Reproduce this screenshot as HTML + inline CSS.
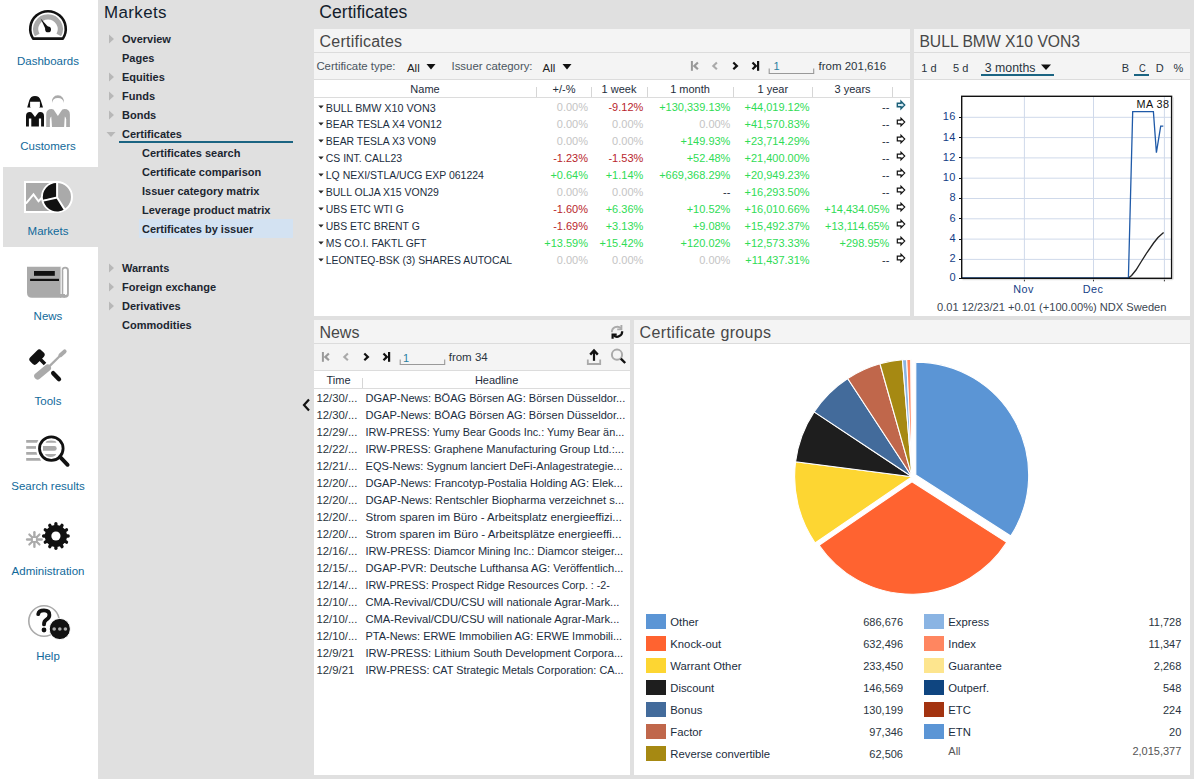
<!DOCTYPE html>
<html><head><meta charset="utf-8"><style>
html,body{margin:0;padding:0;}
body{width:1194px;height:779px;position:relative;overflow:hidden;background:#e0e0e0;font-family:"Liberation Sans", sans-serif;}
.t{position:absolute;white-space:nowrap;line-height:1;}
.tc{text-align:center;}
.r{position:absolute;}
.s{position:absolute;overflow:visible;}
</style></head><body>
<div class="r" style="left:0px;top:0px;width:98px;height:779px;background:#ffffff;"></div>
<div class="r" style="left:3px;top:167px;width:95px;height:80px;background:#e0e0e0;"></div>
<div class="t tc" style="left:-152.0px;width:400px;top:55.67px;font-size:11.5px;color:#11699a;font-weight:normal;">Dashboards</div>
<div class="t tc" style="left:-152.0px;width:400px;top:140.67px;font-size:11.5px;color:#11699a;font-weight:normal;">Customers</div>
<div class="t tc" style="left:-152.0px;width:400px;top:225.67px;font-size:11.5px;color:#11699a;font-weight:normal;">Markets</div>
<div class="t tc" style="left:-152.0px;width:400px;top:310.67px;font-size:11.5px;color:#11699a;font-weight:normal;">News</div>
<div class="t tc" style="left:-152.0px;width:400px;top:395.67px;font-size:11.5px;color:#11699a;font-weight:normal;">Tools</div>
<div class="t tc" style="left:-152.0px;width:400px;top:480.67px;font-size:11.5px;color:#11699a;font-weight:normal;">Search results</div>
<div class="t tc" style="left:-152.0px;width:400px;top:565.67px;font-size:11.5px;color:#11699a;font-weight:normal;">Administration</div>
<div class="t tc" style="left:-152.0px;width:400px;top:650.67px;font-size:11.5px;color:#11699a;font-weight:normal;">Help</div>
<svg class="s" style="left:26px;top:8px;" width="44" height="34" viewBox="0 0 44 34">
<path d="M7.1 30.6 A17.75 17.75 0 1 1 36.9 30.6 Z" fill="#fff" stroke="#111" stroke-width="2.6" stroke-linejoin="round"/>
<path d="M11.2 27 A12.3 12.3 0 1 1 32.8 27" fill="none" stroke="#aaa" stroke-width="5.2"/>
<path d="M14.6 10.6 L20.2 22.6 L23.6 20.4 Z" fill="#111"/>
<circle cx="22.1" cy="21.4" r="2.9" fill="#111"/>
</svg>
<svg class="s" style="left:24px;top:92px;" width="48" height="38" viewBox="0 0 48 38">
<path d="M3.2 15.6 L5.3 8.2 Q6.6 3.9 11 3.9 Q15.4 3.9 16.7 8.2 L19 15.6 L15.1 15.6 L15.9 14.8 L15.9 9.8 L6.1 9.8 L6.1 14.8 L6.8 15.6 Z" fill="#111"/>
<path d="M2 34.6 L2 24 Q2 20 5.8 20 Q7.4 20 8.4 21.4 L11 25.1 L13.6 21.4 Q14.6 20 16.2 20 Q20 20 20 24 L20 34.6 L17.1 34.6 L17.1 26.6 L14.9 26.6 L14.9 34.6 L7.3 34.6 L7.3 26.6 L4.9 26.6 L4.9 34.6 Z" fill="#111"/>
<path d="M28.04 11 A6.1 6.1 0 1 1 39.76 11 A5.92 5.92 0 0 0 28.04 11 Z" fill="#aaa"/>
<path d="M22.2 34.9 L22.2 22.6 Q22.2 17.1 27.6 17.1 Q29.8 17.1 30.9 19.4 L33.9 23.9 L36.9 19.4 Q38 17.1 40.4 17.1 Q45.9 17.1 45.9 22.6 L45.9 34.9 Z" fill="#aaa"/>
<path d="M25.9 34.9 L25.9 27.5 Q26.3 25 27.3 24.6 L28 34.9 Z" fill="#fff"/>
<path d="M42.2 34.9 L42.2 27.5 Q41.8 25 40.8 24.6 L40.1 34.9 Z" fill="#fff"/>
</svg>
<svg class="s" style="left:22px;top:178px;" width="54" height="38" viewBox="0 0 54 38">
<rect x="3" y="4" width="32" height="30" fill="#aaa" stroke="#fff" stroke-width="2"/>
<path d="M3.9 25.6 L11.5 16.3 L16.5 23.3 L20.3 19.3" fill="none" stroke="#fff" stroke-width="2"/>
<circle cx="35" cy="19" r="15" fill="#aaa" stroke="#fff" stroke-width="2"/>
<path d="M35.1 19.5 L35.1 5 A14 14 0 0 0 21.1 21.7 Z" fill="#111"/>
<path d="M35.1 19.5 L21.6 23 A14 14 0 0 0 42.4 31.5 Z" fill="#111"/>
<path d="M35.1 4 L35.1 19.5 L43.2 32.4 M35.1 19.5 L20.5 22.9" fill="none" stroke="#fff" stroke-width="2"/>
</svg>
<svg class="s" style="left:24px;top:264px;" width="48" height="36" viewBox="0 0 48 36">
<path d="M3 2.7 L37.2 2.7 L37.2 33.7 L8 33.7 Q3 33.7 3 28.7 Z" fill="#aaa"/>
<rect x="37.4" y="2.7" width="7.5" height="31" rx="3.75" fill="#aaa"/>
<rect x="39.3" y="4.4" width="3.7" height="26.6" rx="1.85" fill="#fff"/>
<rect x="36.6" y="2.7" width="1" height="27.6" fill="#fff"/>
<path d="M36 30 L41 30 L41 33.7 L36 33.7 Z" fill="#aaa"/>
<rect x="10" y="7" width="20.8" height="4.8" fill="#111"/>
<rect x="6.1" y="14.8" width="28.9" height="2.2" fill="#111"/>
</svg>
<svg class="s" style="left:24px;top:346px;" width="48" height="40" viewBox="0 0 48 40">
<path d="M29.2 27.2 L35 33.2" stroke="#111" stroke-width="4.4" stroke-linecap="round"/>
<path d="M5.6 12.6 L12.4 5.8 Q14.6 3.6 16.8 5.8 L19 8 Q21.2 10.2 19 12.4 L12.2 19.2 Q10 21.4 7.8 19.2 L5.6 17 Q3.4 14.8 5.6 12.6 Z" fill="#111" transform="translate(0.7,-1.4)"/>
<path d="M15.5 12.5 L21 18" stroke="#111" stroke-width="3.6"/>
<path d="M13.6 30.2 L23.6 21.9" stroke="#aaa" stroke-width="6.8" stroke-linecap="round"/>
<path d="M24 21.6 L36.6 9.2" stroke="#aaa" stroke-width="2.3"/>
<path d="M36.4 9.2 L40.6 5.4" stroke="#aaa" stroke-width="4" stroke-linecap="round"/>
</svg>
<svg class="s" style="left:24px;top:432px;" width="50" height="38" viewBox="0 0 50 38">
<path d="M2.2 8 L14.4 8 L13 10.7 L2.2 10.7 Z" fill="#aaa"/>
<rect x="2.2" y="14.1" width="9.8" height="2.7" fill="#aaa"/>
<path d="M2.2 20 L12.4 20 L13.2 22.7 L2.2 22.7 Z" fill="#aaa"/>
<path d="M2.2 26.1 L15.6 26.1 L17.1 28.8 L2.2 28.8 Z" fill="#aaa"/>
<path d="M21.7 10.8 A5.35 2.3 0 0 1 32.4 10.8 Z" fill="#aaa"/>
<path d="M19 14.1 L30.4 14.1 Q32.7 14.1 32.7 16.45 Q32.7 18.8 30.4 18.8 L19 18.8 Z" fill="#aaa"/>
<path d="M21 22 A5.6 2.9 0 0 0 32.2 22 Z" fill="#aaa"/>
<circle cx="27.3" cy="16.6" r="11.8" fill="none" stroke="#111" stroke-width="2.8"/>
<path d="M36 24.8 L43.6 32.8" stroke="#111" stroke-width="3.9" stroke-linecap="round"/>
</svg>
<svg class="s" style="left:24px;top:510px;" width="50" height="44" viewBox="0 0 50 44">
<circle cx="31.9" cy="26" r="11.1" fill="#111"/>
<path d="M31.90 17.00 L31.90 13.70" stroke="#111" stroke-width="3.3" stroke-linecap="round"/><path d="M36.40 18.21 L38.05 15.35" stroke="#111" stroke-width="3.3" stroke-linecap="round"/><path d="M39.69 21.50 L42.55 19.85" stroke="#111" stroke-width="3.3" stroke-linecap="round"/><path d="M40.90 26.00 L44.20 26.00" stroke="#111" stroke-width="3.3" stroke-linecap="round"/><path d="M39.69 30.50 L42.55 32.15" stroke="#111" stroke-width="3.3" stroke-linecap="round"/><path d="M36.40 33.79 L38.05 36.65" stroke="#111" stroke-width="3.3" stroke-linecap="round"/><path d="M31.90 35.00 L31.90 38.30" stroke="#111" stroke-width="3.3" stroke-linecap="round"/><path d="M27.40 33.79 L25.75 36.65" stroke="#111" stroke-width="3.3" stroke-linecap="round"/><path d="M24.11 30.50 L21.25 32.15" stroke="#111" stroke-width="3.3" stroke-linecap="round"/><path d="M22.90 26.00 L19.60 26.00" stroke="#111" stroke-width="3.3" stroke-linecap="round"/><path d="M24.11 21.50 L21.25 19.85" stroke="#111" stroke-width="3.3" stroke-linecap="round"/><path d="M27.40 18.21 L25.75 15.35" stroke="#111" stroke-width="3.3" stroke-linecap="round"/>
<circle cx="31.9" cy="26" r="4.6" fill="#fff"/>
<g stroke="#aaa" stroke-width="2.4" stroke-linecap="round">
<path d="M10.4 22.2 L10.4 36.8"/><path d="M3.1 29.5 L17.7 29.5"/>
</g>
<g stroke="#aaa" stroke-width="2.1" stroke-linecap="round">
<path d="M5.3 24.4 L15.5 34.6"/><path d="M15.5 24.4 L5.3 34.6"/>
</g>
<rect x="7.3" y="26.4" width="6.2" height="6.2" fill="#aaa"/>
<rect x="8.9" y="28" width="3" height="3" fill="#fff"/>
</svg>
<svg class="s" style="left:24px;top:600px;" width="50" height="42" viewBox="0 0 50 42">
<circle cx="20" cy="21" r="15.2" fill="none" stroke="#aaa" stroke-width="1.6"/>
<path d="M14.2 14.2 Q14.8 10.4 20 10.4 Q25.4 10.4 25.4 14.9 Q25.4 17.8 22.4 19.6 Q20 21 20 24.4" fill="none" stroke="#111" stroke-width="3.8" stroke-linecap="round"/>
<circle cx="20" cy="30" r="2.4" fill="#111"/>
<circle cx="35.8" cy="29" r="10.6" fill="#111" stroke="#fff" stroke-width="1"/>
<circle cx="30.2" cy="29" r="1.8" fill="#aaa"/>
<circle cx="35.8" cy="29" r="1.8" fill="#aaa"/>
<circle cx="41.4" cy="29" r="1.8" fill="#aaa"/>
</svg>
<div class="t" style="left:104.0px;top:5.09px;font-size:16.9px;color:#10202e;font-weight:normal;letter-spacing:0.4px">Markets</div>
<div class="t" style="left:122.0px;top:34.09px;font-size:11px;color:#1c2630;font-weight:bold;">Overview</div>
<svg class="s" style="left:108px;top:33.7px;" width="8" height="10" viewBox="0 0 8 10"><path d="M1 0.5 L6 5 L1 9.5 Z" fill="#b8b8b8"/></svg>
<div class="t" style="left:122.0px;top:53.09px;font-size:11px;color:#1c2630;font-weight:bold;">Pages</div>
<div class="t" style="left:122.0px;top:72.09px;font-size:11px;color:#1c2630;font-weight:bold;">Equities</div>
<svg class="s" style="left:108px;top:71.7px;" width="8" height="10" viewBox="0 0 8 10"><path d="M1 0.5 L6 5 L1 9.5 Z" fill="#b8b8b8"/></svg>
<div class="t" style="left:122.0px;top:91.09px;font-size:11px;color:#1c2630;font-weight:bold;">Funds</div>
<svg class="s" style="left:108px;top:90.7px;" width="8" height="10" viewBox="0 0 8 10"><path d="M1 0.5 L6 5 L1 9.5 Z" fill="#b8b8b8"/></svg>
<div class="t" style="left:122.0px;top:110.09px;font-size:11px;color:#1c2630;font-weight:bold;">Bonds</div>
<svg class="s" style="left:108px;top:109.7px;" width="8" height="10" viewBox="0 0 8 10"><path d="M1 0.5 L6 5 L1 9.5 Z" fill="#b8b8b8"/></svg>
<div class="t" style="left:122.0px;top:129.09px;font-size:11px;color:#1c2630;font-weight:bold;">Certificates</div>
<svg class="s" style="left:106px;top:130.7px;" width="10" height="7" viewBox="0 0 10 7"><path d="M0.5 1 L9.5 1 L5 6 Z" fill="#b8b8b8"/></svg>
<div class="r" style="left:119px;top:141px;width:174px;height:2px;background:#1b6482;"></div>
<div class="r" style="left:139px;top:219px;width:154px;height:19px;background:#d3e2f2;"></div>
<div class="t" style="left:142.0px;top:148.09px;font-size:11px;color:#1c2630;font-weight:bold;">Certificates search</div>
<div class="t" style="left:142.0px;top:167.09px;font-size:11px;color:#1c2630;font-weight:bold;">Certificate comparison</div>
<div class="t" style="left:142.0px;top:186.09px;font-size:11px;color:#1c2630;font-weight:bold;">Issuer category matrix</div>
<div class="t" style="left:142.0px;top:205.09px;font-size:11px;color:#1c2630;font-weight:bold;">Leverage product matrix</div>
<div class="t" style="left:142.0px;top:224.09px;font-size:11px;color:#1c2630;font-weight:bold;">Certificates by issuer</div>
<div class="t" style="left:122.0px;top:263.09px;font-size:11px;color:#1c2630;font-weight:bold;">Warrants</div>
<svg class="s" style="left:108px;top:262.7px;" width="8" height="10" viewBox="0 0 8 10"><path d="M1 0.5 L6 5 L1 9.5 Z" fill="#b8b8b8"/></svg>
<div class="t" style="left:122.0px;top:282.09px;font-size:11px;color:#1c2630;font-weight:bold;">Foreign exchange</div>
<svg class="s" style="left:108px;top:281.7px;" width="8" height="10" viewBox="0 0 8 10"><path d="M1 0.5 L6 5 L1 9.5 Z" fill="#b8b8b8"/></svg>
<div class="t" style="left:122.0px;top:301.09px;font-size:11px;color:#1c2630;font-weight:bold;">Derivatives</div>
<svg class="s" style="left:108px;top:300.7px;" width="8" height="10" viewBox="0 0 8 10"><path d="M1 0.5 L6 5 L1 9.5 Z" fill="#b8b8b8"/></svg>
<div class="t" style="left:122.0px;top:320.09px;font-size:11px;color:#1c2630;font-weight:bold;">Commodities</div>
<svg class="s" style="left:300px;top:397.3px;" width="12" height="16" viewBox="0 0 12 16"><path d="M9 2.5 L4 8 L9 13.5" fill="none" stroke="#111" stroke-width="2.2"/></svg>
<div class="t" style="left:319.3px;top:3.70px;font-size:17.6px;color:#14202c;font-weight:normal;">Certificates</div>
<div class="r" style="left:314px;top:29px;width:596px;height:287px;background:#ffffff;"></div>
<div class="r" style="left:314px;top:29px;width:596px;height:23px;background:#f4f4f4;"></div>
<div class="r" style="left:314px;top:52px;width:596px;height:1px;background:#dcdcdc;"></div>
<div class="r" style="left:314px;top:53px;width:596px;height:26px;background:#f4f4f4;"></div>
<div class="r" style="left:314px;top:79px;width:596px;height:1px;background:#dcdcdc;"></div>
<div class="r" style="left:914px;top:29px;width:276px;height:287px;background:#ffffff;"></div>
<div class="r" style="left:914px;top:29px;width:276px;height:23px;background:#f4f4f4;"></div>
<div class="r" style="left:914px;top:52px;width:276px;height:1px;background:#dcdcdc;"></div>
<div class="r" style="left:914px;top:53px;width:276px;height:26px;background:#f4f4f4;"></div>
<div class="r" style="left:914px;top:79px;width:276px;height:1px;background:#dcdcdc;"></div>
<div class="r" style="left:314px;top:320px;width:316px;height:455px;background:#ffffff;"></div>
<div class="r" style="left:314px;top:320px;width:316px;height:23px;background:#f4f4f4;"></div>
<div class="r" style="left:314px;top:343px;width:316px;height:1px;background:#dcdcdc;"></div>
<div class="r" style="left:314px;top:344px;width:316px;height:26px;background:#f4f4f4;"></div>
<div class="r" style="left:314px;top:370px;width:316px;height:1px;background:#dcdcdc;"></div>
<div class="r" style="left:634px;top:320px;width:556px;height:455px;background:#ffffff;"></div>
<div class="r" style="left:634px;top:320px;width:556px;height:23px;background:#f4f4f4;"></div>
<div class="r" style="left:634px;top:343px;width:556px;height:1px;background:#dcdcdc;"></div>
<div class="t" style="left:319.6px;top:34.26px;font-size:16px;color:#474747;font-weight:normal;letter-spacing:0.22px">Certificates</div>
<div class="t" style="left:919.4px;top:33.91px;font-size:15.7px;color:#474747;font-weight:normal;">BULL BMW X10 VON3</div>
<div class="t" style="left:319.4px;top:324.86px;font-size:16px;color:#474747;font-weight:normal;">News</div>
<div class="t" style="left:639.6px;top:325.26px;font-size:16px;color:#474747;font-weight:normal;letter-spacing:0.36px">Certificate groups</div>
<div class="t" style="left:316.4px;top:61.25px;font-size:11.4px;color:#4a5560;font-weight:normal;">Certificate type:</div>
<div class="t" style="left:407.0px;top:63.05px;font-size:11.4px;color:#222;font-weight:normal;">All</div>
<svg class="s" style="left:425px;top:63px;" width="12" height="8" viewBox="0 0 12 8"><path d="M1.5 1 L10.5 1 L6 6.5 Z" fill="#111"/></svg>
<div class="t" style="left:451.5px;top:61.25px;font-size:11.4px;color:#4a5560;font-weight:normal;">Issuer category:</div>
<div class="t" style="left:542.6px;top:63.05px;font-size:11.4px;color:#222;font-weight:normal;">All</div>
<svg class="s" style="left:561px;top:63px;" width="12" height="8" viewBox="0 0 12 8"><path d="M1.5 1 L10.5 1 L6 6.5 Z" fill="#111"/></svg>
<svg class="s" style="left:690px;top:60px;" width="70" height="12" viewBox="0 0 70 12">
<rect x="0.9" y="1" width="2" height="9.8" fill="#999"/>
<path d="M7.9 2.5 L4.3 5.9 L7.9 9.3" fill="none" stroke="#999" stroke-width="2.2"/>
<path d="M26.9 2.5 L23.3 5.9 L26.9 9.3" fill="none" stroke="#aaa" stroke-width="2.1"/>
<path d="M43.3 2.5 L46.9 5.9 L43.3 9.3" fill="none" stroke="#111" stroke-width="2.2"/>
<path d="M62.5 2.5 L65.9 5.9 L62.5 9.3" fill="none" stroke="#111" stroke-width="2.2"/>
<rect x="67" y="1" width="2.2" height="9.8" fill="#111"/>
</svg>
<svg class="s" style="left:768px;top:67.6px;" width="47" height="7" viewBox="0 0 47 7"><path d="M1.2 0.5 L1.2 5.5 L45.7 5.5 L45.7 0.5" fill="none" stroke="#999" stroke-width="1.1"/></svg>
<div class="t" style="left:773.5px;top:61.39px;font-size:11px;color:#2a7fa0;font-weight:normal;">1</div>
<div class="t" style="left:818.5px;top:61.47px;font-size:11.5px;color:#2a3440;font-weight:normal;">from 201,616</div>
<div class="r" style="left:314px;top:97px;width:596px;height:1px;background:#dcdcdc;"></div>
<div class="r" style="left:314px;top:388px;width:316px;height:1px;background:#dcdcdc;"></div>
<div class="r" style="left:536px;top:87px;width:1px;height:10px;background:#d6d6d6;"></div>
<div class="r" style="left:591px;top:87px;width:1px;height:10px;background:#d6d6d6;"></div>
<div class="r" style="left:647px;top:87px;width:1px;height:10px;background:#d6d6d6;"></div>
<div class="r" style="left:733px;top:87px;width:1px;height:10px;background:#d6d6d6;"></div>
<div class="r" style="left:812px;top:87px;width:1px;height:10px;background:#d6d6d6;"></div>
<div class="r" style="left:892px;top:87px;width:1px;height:10px;background:#d6d6d6;"></div>
<div class="t tc" style="left:225.0px;width:400px;top:84.39px;font-size:11px;color:#1e2d3c;font-weight:normal;">Name</div>
<div class="t tc" style="left:364.0px;width:400px;top:84.39px;font-size:11px;color:#1e2d3c;font-weight:normal;">+/-%</div>
<div class="t tc" style="left:419.0px;width:400px;top:84.39px;font-size:11px;color:#1e2d3c;font-weight:normal;">1 week</div>
<div class="t tc" style="left:490.0px;width:400px;top:84.39px;font-size:11px;color:#1e2d3c;font-weight:normal;">1 month</div>
<div class="t tc" style="left:572.8px;width:400px;top:84.39px;font-size:11px;color:#1e2d3c;font-weight:normal;">1 year</div>
<div class="t tc" style="left:652.6px;width:400px;top:84.39px;font-size:11px;color:#1e2d3c;font-weight:normal;">3 years</div>
<svg class="s" style="left:317.5px;top:104.60000000000001px;" width="7" height="5" viewBox="0 0 7 5"><path d="M0.3 0.4 L5.7 0.4 L3 3.4 Z" fill="#2a2a2a"/></svg>
<div class="t" style="left:325.8px;top:102.53px;font-size:10.72px;color:#1b2d40;font-weight:normal;">BULL BMW X10 VON3</div>
<div class="t" style="right:606.0px;top:102.29px;font-size:11px;color:#c4c4c4;font-weight:normal;">0.00%</div>
<div class="t" style="right:550.7px;top:102.29px;font-size:11px;color:#b81e2c;font-weight:normal;">-9.12%</div>
<div class="t" style="right:463.6px;top:102.29px;font-size:11px;color:#2fdc55;font-weight:normal;">+130,339.13%</div>
<div class="t" style="right:384.4px;top:102.29px;font-size:11px;color:#2fdc55;font-weight:normal;">+44,019.12%</div>
<div class="t" style="right:304.6px;top:102.29px;font-size:11px;color:#1e2d3c;font-weight:normal;">--</div>
<svg class="s" style="left:895.5px;top:99.5px;" width="11" height="11" viewBox="0 0 11 11"><path d="M1.3 3.2 L5 3.2 L5 1.2 L8.7 5 L5 8.8 L5 6.8 L1.3 6.8 Z" fill="#d6eaf2" stroke="#1b5f78" stroke-width="1.4" stroke-linejoin="miter"/></svg>
<svg class="s" style="left:317.5px;top:121.60000000000001px;" width="7" height="5" viewBox="0 0 7 5"><path d="M0.3 0.4 L5.7 0.4 L3 3.4 Z" fill="#2a2a2a"/></svg>
<div class="t" style="left:325.8px;top:119.80px;font-size:10.4px;color:#1b2d40;font-weight:normal;">BEAR TESLA X4 VON12</div>
<div class="t" style="right:606.0px;top:119.29px;font-size:11px;color:#c4c4c4;font-weight:normal;">0.00%</div>
<div class="t" style="right:550.7px;top:119.29px;font-size:11px;color:#c4c4c4;font-weight:normal;">0.00%</div>
<div class="t" style="right:463.6px;top:119.29px;font-size:11px;color:#c4c4c4;font-weight:normal;">0.00%</div>
<div class="t" style="right:384.4px;top:119.29px;font-size:11px;color:#2fdc55;font-weight:normal;">+41,570.83%</div>
<div class="t" style="right:304.6px;top:119.29px;font-size:11px;color:#1e2d3c;font-weight:normal;">--</div>
<svg class="s" style="left:895.5px;top:116.5px;" width="11" height="11" viewBox="0 0 11 11"><path d="M1.3 3.2 L5 3.2 L5 1.2 L8.7 5 L5 8.8 L5 6.8 L1.3 6.8 Z" fill="#fff" stroke="#111" stroke-width="1.2" stroke-linejoin="miter"/></svg>
<svg class="s" style="left:317.5px;top:138.6px;" width="7" height="5" viewBox="0 0 7 5"><path d="M0.3 0.4 L5.7 0.4 L3 3.4 Z" fill="#2a2a2a"/></svg>
<div class="t" style="left:325.8px;top:136.80px;font-size:10.4px;color:#1b2d40;font-weight:normal;">BEAR TESLA X3 VON9</div>
<div class="t" style="right:606.0px;top:136.29px;font-size:11px;color:#c4c4c4;font-weight:normal;">0.00%</div>
<div class="t" style="right:550.7px;top:136.29px;font-size:11px;color:#c4c4c4;font-weight:normal;">0.00%</div>
<div class="t" style="right:463.6px;top:136.29px;font-size:11px;color:#2fdc55;font-weight:normal;">+149.93%</div>
<div class="t" style="right:384.4px;top:136.29px;font-size:11px;color:#2fdc55;font-weight:normal;">+23,714.29%</div>
<div class="t" style="right:304.6px;top:136.29px;font-size:11px;color:#1e2d3c;font-weight:normal;">--</div>
<svg class="s" style="left:895.5px;top:133.5px;" width="11" height="11" viewBox="0 0 11 11"><path d="M1.3 3.2 L5 3.2 L5 1.2 L8.7 5 L5 8.8 L5 6.8 L1.3 6.8 Z" fill="#fff" stroke="#111" stroke-width="1.2" stroke-linejoin="miter"/></svg>
<svg class="s" style="left:317.5px;top:155.6px;" width="7" height="5" viewBox="0 0 7 5"><path d="M0.3 0.4 L5.7 0.4 L3 3.4 Z" fill="#2a2a2a"/></svg>
<div class="t" style="left:325.8px;top:153.79px;font-size:10.41px;color:#1b2d40;font-weight:normal;">CS INT. CALL23</div>
<div class="t" style="right:606.0px;top:153.29px;font-size:11px;color:#b81e2c;font-weight:normal;">-1.23%</div>
<div class="t" style="right:550.7px;top:153.29px;font-size:11px;color:#b81e2c;font-weight:normal;">-1.53%</div>
<div class="t" style="right:463.6px;top:153.29px;font-size:11px;color:#2fdc55;font-weight:normal;">+52.48%</div>
<div class="t" style="right:384.4px;top:153.29px;font-size:11px;color:#2fdc55;font-weight:normal;">+21,400.00%</div>
<div class="t" style="right:304.6px;top:153.29px;font-size:11px;color:#1e2d3c;font-weight:normal;">--</div>
<svg class="s" style="left:895.5px;top:150.5px;" width="11" height="11" viewBox="0 0 11 11"><path d="M1.3 3.2 L5 3.2 L5 1.2 L8.7 5 L5 8.8 L5 6.8 L1.3 6.8 Z" fill="#fff" stroke="#111" stroke-width="1.2" stroke-linejoin="miter"/></svg>
<svg class="s" style="left:317.5px;top:172.6px;" width="7" height="5" viewBox="0 0 7 5"><path d="M0.3 0.4 L5.7 0.4 L3 3.4 Z" fill="#2a2a2a"/></svg>
<div class="t" style="left:325.8px;top:170.74px;font-size:10.47px;color:#1b2d40;font-weight:normal;">LQ NEXI/STLA/UCG EXP 061224</div>
<div class="t" style="right:606.0px;top:170.29px;font-size:11px;color:#2fdc55;font-weight:normal;">+0.64%</div>
<div class="t" style="right:550.7px;top:170.29px;font-size:11px;color:#2fdc55;font-weight:normal;">+1.14%</div>
<div class="t" style="right:463.6px;top:170.29px;font-size:11px;color:#2fdc55;font-weight:normal;">+669,368.29%</div>
<div class="t" style="right:384.4px;top:170.29px;font-size:11px;color:#2fdc55;font-weight:normal;">+20,949.23%</div>
<div class="t" style="right:304.6px;top:170.29px;font-size:11px;color:#1e2d3c;font-weight:normal;">--</div>
<svg class="s" style="left:895.5px;top:167.5px;" width="11" height="11" viewBox="0 0 11 11"><path d="M1.3 3.2 L5 3.2 L5 1.2 L8.7 5 L5 8.8 L5 6.8 L1.3 6.8 Z" fill="#fff" stroke="#111" stroke-width="1.2" stroke-linejoin="miter"/></svg>
<svg class="s" style="left:317.5px;top:189.6px;" width="7" height="5" viewBox="0 0 7 5"><path d="M0.3 0.4 L5.7 0.4 L3 3.4 Z" fill="#2a2a2a"/></svg>
<div class="t" style="left:325.8px;top:187.74px;font-size:10.47px;color:#1b2d40;font-weight:normal;">BULL OLJA X15 VON29</div>
<div class="t" style="right:606.0px;top:187.29px;font-size:11px;color:#c4c4c4;font-weight:normal;">0.00%</div>
<div class="t" style="right:550.7px;top:187.29px;font-size:11px;color:#c4c4c4;font-weight:normal;">0.00%</div>
<div class="t" style="right:463.6px;top:187.29px;font-size:11px;color:#1e2d3c;font-weight:normal;">--</div>
<div class="t" style="right:384.4px;top:187.29px;font-size:11px;color:#2fdc55;font-weight:normal;">+16,293.50%</div>
<div class="t" style="right:304.6px;top:187.29px;font-size:11px;color:#1e2d3c;font-weight:normal;">--</div>
<svg class="s" style="left:895.5px;top:184.5px;" width="11" height="11" viewBox="0 0 11 11"><path d="M1.3 3.2 L5 3.2 L5 1.2 L8.7 5 L5 8.8 L5 6.8 L1.3 6.8 Z" fill="#fff" stroke="#111" stroke-width="1.2" stroke-linejoin="miter"/></svg>
<svg class="s" style="left:317.5px;top:206.6px;" width="7" height="5" viewBox="0 0 7 5"><path d="M0.3 0.4 L5.7 0.4 L3 3.4 Z" fill="#2a2a2a"/></svg>
<div class="t" style="left:325.8px;top:204.80px;font-size:10.4px;color:#1b2d40;font-weight:normal;">UBS ETC WTI G</div>
<div class="t" style="right:606.0px;top:204.29px;font-size:11px;color:#b81e2c;font-weight:normal;">-1.60%</div>
<div class="t" style="right:550.7px;top:204.29px;font-size:11px;color:#2fdc55;font-weight:normal;">+6.36%</div>
<div class="t" style="right:463.6px;top:204.29px;font-size:11px;color:#2fdc55;font-weight:normal;">+10.52%</div>
<div class="t" style="right:384.4px;top:204.29px;font-size:11px;color:#2fdc55;font-weight:normal;">+16,010.66%</div>
<div class="t" style="right:304.6px;top:204.29px;font-size:11px;color:#2fdc55;font-weight:normal;">+14,434.05%</div>
<svg class="s" style="left:895.5px;top:201.5px;" width="11" height="11" viewBox="0 0 11 11"><path d="M1.3 3.2 L5 3.2 L5 1.2 L8.7 5 L5 8.8 L5 6.8 L1.3 6.8 Z" fill="#fff" stroke="#111" stroke-width="1.2" stroke-linejoin="miter"/></svg>
<svg class="s" style="left:317.5px;top:223.6px;" width="7" height="5" viewBox="0 0 7 5"><path d="M0.3 0.4 L5.7 0.4 L3 3.4 Z" fill="#2a2a2a"/></svg>
<div class="t" style="left:325.8px;top:221.80px;font-size:10.4px;color:#1b2d40;font-weight:normal;">UBS ETC BRENT G</div>
<div class="t" style="right:606.0px;top:221.29px;font-size:11px;color:#b81e2c;font-weight:normal;">-1.69%</div>
<div class="t" style="right:550.7px;top:221.29px;font-size:11px;color:#2fdc55;font-weight:normal;">+3.13%</div>
<div class="t" style="right:463.6px;top:221.29px;font-size:11px;color:#2fdc55;font-weight:normal;">+9.08%</div>
<div class="t" style="right:384.4px;top:221.29px;font-size:11px;color:#2fdc55;font-weight:normal;">+15,492.37%</div>
<div class="t" style="right:304.6px;top:221.29px;font-size:11px;color:#2fdc55;font-weight:normal;">+13,114.65%</div>
<svg class="s" style="left:895.5px;top:218.5px;" width="11" height="11" viewBox="0 0 11 11"><path d="M1.3 3.2 L5 3.2 L5 1.2 L8.7 5 L5 8.8 L5 6.8 L1.3 6.8 Z" fill="#fff" stroke="#111" stroke-width="1.2" stroke-linejoin="miter"/></svg>
<svg class="s" style="left:317.5px;top:240.6px;" width="7" height="5" viewBox="0 0 7 5"><path d="M0.3 0.4 L5.7 0.4 L3 3.4 Z" fill="#2a2a2a"/></svg>
<div class="t" style="left:325.8px;top:238.80px;font-size:10.4px;color:#1b2d40;font-weight:normal;">MS CO.I. FAKTL GFT</div>
<div class="t" style="right:606.0px;top:238.29px;font-size:11px;color:#2fdc55;font-weight:normal;">+13.59%</div>
<div class="t" style="right:550.7px;top:238.29px;font-size:11px;color:#2fdc55;font-weight:normal;">+15.42%</div>
<div class="t" style="right:463.6px;top:238.29px;font-size:11px;color:#2fdc55;font-weight:normal;">+120.02%</div>
<div class="t" style="right:384.4px;top:238.29px;font-size:11px;color:#2fdc55;font-weight:normal;">+12,573.33%</div>
<div class="t" style="right:304.6px;top:238.29px;font-size:11px;color:#2fdc55;font-weight:normal;">+298.95%</div>
<svg class="s" style="left:895.5px;top:235.5px;" width="11" height="11" viewBox="0 0 11 11"><path d="M1.3 3.2 L5 3.2 L5 1.2 L8.7 5 L5 8.8 L5 6.8 L1.3 6.8 Z" fill="#fff" stroke="#111" stroke-width="1.2" stroke-linejoin="miter"/></svg>
<svg class="s" style="left:317.5px;top:257.59999999999997px;" width="7" height="5" viewBox="0 0 7 5"><path d="M0.3 0.4 L5.7 0.4 L3 3.4 Z" fill="#2a2a2a"/></svg>
<div class="t" style="left:325.8px;top:255.80px;font-size:10.4px;color:#1b2d40;font-weight:normal;">LEONTEQ-BSK (3) SHARES AUTOCAL</div>
<div class="t" style="right:606.0px;top:255.29px;font-size:11px;color:#c4c4c4;font-weight:normal;">0.00%</div>
<div class="t" style="right:550.7px;top:255.29px;font-size:11px;color:#c4c4c4;font-weight:normal;">0.00%</div>
<div class="t" style="right:463.6px;top:255.29px;font-size:11px;color:#c4c4c4;font-weight:normal;">0.00%</div>
<div class="t" style="right:384.4px;top:255.29px;font-size:11px;color:#2fdc55;font-weight:normal;">+11,437.31%</div>
<div class="t" style="right:304.6px;top:255.29px;font-size:11px;color:#1e2d3c;font-weight:normal;">--</div>
<svg class="s" style="left:895.5px;top:252.49999999999997px;" width="11" height="11" viewBox="0 0 11 11"><path d="M1.3 3.2 L5 3.2 L5 1.2 L8.7 5 L5 8.8 L5 6.8 L1.3 6.8 Z" fill="#fff" stroke="#111" stroke-width="1.2" stroke-linejoin="miter"/></svg>
<div class="t" style="left:921.3px;top:62.59px;font-size:11px;color:#2a3440;font-weight:normal;">1 d</div>
<div class="t" style="left:953.0px;top:62.59px;font-size:11px;color:#2a3440;font-weight:normal;">5 d</div>
<div class="t" style="left:984.8px;top:62.49px;font-size:12.3px;color:#2a3440;font-weight:normal;">3 months</div>
<svg class="s" style="left:1040px;top:64px;" width="12" height="7" viewBox="0 0 12 7"><path d="M1 0.5 L11 0.5 L6 6 Z" fill="#111"/></svg>
<div class="r" style="left:981px;top:74px;width:73px;height:2px;background:#1b6482;"></div>
<div class="t" style="left:1121.7px;top:62.59px;font-size:11px;color:#2a3440;font-weight:normal;">B</div>
<div class="t" style="left:1138.6px;top:62.59px;font-size:11px;color:#2a3440;font-weight:normal;transform:scaleX(0.85);transform-origin:0 0">C</div>
<div class="r" style="left:1134px;top:74px;width:15px;height:2px;background:#1b6482;"></div>
<div class="t" style="left:1155.8px;top:62.59px;font-size:11px;color:#2a3440;font-weight:normal;">D</div>
<div class="t" style="left:1173.5px;top:62.59px;font-size:11px;color:#2a3440;font-weight:normal;">%</div>
<svg class="s" style="left:900px;top:80px;" width="294" height="236" viewBox="0 0 294 236">
<g transform="translate(-900,-80)">
<path d="M962 259.4 H1171" stroke="#cfd9ea" stroke-width="1"/><path d="M962 239.1 H1171" stroke="#cfd9ea" stroke-width="1"/><path d="M962 218.8 H1171" stroke="#cfd9ea" stroke-width="1"/><path d="M962 198.5 H1171" stroke="#cfd9ea" stroke-width="1"/><path d="M962 178.2 H1171" stroke="#cfd9ea" stroke-width="1"/><path d="M962 157.9 H1171" stroke="#cfd9ea" stroke-width="1"/><path d="M962 137.6 H1171" stroke="#cfd9ea" stroke-width="1"/><path d="M962 117.3 H1171" stroke="#cfd9ea" stroke-width="1"/><path d="M1024.4 97 V278" stroke="#cfd9ea" stroke-width="1"/><path d="M1093.5 97 V278" stroke="#cfd9ea" stroke-width="1"/><path d="M1164.4 97 V278" stroke="#cfd9ea" stroke-width="1"/><path d="M1024.4 278 V281.3" stroke="#111" stroke-width="1"/><path d="M1093.5 278 V281.3" stroke="#111" stroke-width="1"/><path d="M1164.4 278 V281.3" stroke="#111" stroke-width="1"/>
<path d="M1128.4 278 L1131.6 275.5 L1136 270 L1141 262 L1147 252.5 L1153.6 243 L1158 237.5 L1163.6 232.4" fill="none" stroke="#222" stroke-width="1.35"/>
<path d="M962 278 L1128.4 278 L1132.7 111.6 L1153.4 111.6 L1156.4 152.6 L1160.7 126.2 L1163.3 126.2" fill="none" stroke="#1f5aa8" stroke-width="1.3"/>
<rect x="961.7" y="96.3" width="209.9" height="182" fill="none" stroke="#111" stroke-width="1.4"/><rect x="962.5" y="279.2" width="210" height="1" fill="#d4d4d4"/>
<rect x="1172.5" y="97.5" width="1" height="182" fill="#d0d0d0"/>
</g>
</svg>
<div class="t" style="right:238.5px;top:271.99px;font-size:11px;color:#143e86;font-weight:normal;letter-spacing:0.6px;margin-right:-0.6px">0</div>
<div class="t" style="right:238.5px;top:253.39px;font-size:11px;color:#143e86;font-weight:normal;letter-spacing:0.6px;margin-right:-0.6px">2</div>
<div class="t" style="right:238.5px;top:233.09px;font-size:11px;color:#143e86;font-weight:normal;letter-spacing:0.6px;margin-right:-0.6px">4</div>
<div class="t" style="right:238.5px;top:212.79px;font-size:11px;color:#143e86;font-weight:normal;letter-spacing:0.6px;margin-right:-0.6px">6</div>
<div class="t" style="right:238.5px;top:192.49px;font-size:11px;color:#143e86;font-weight:normal;letter-spacing:0.6px;margin-right:-0.6px">8</div>
<div class="t" style="right:238.5px;top:172.19px;font-size:11px;color:#143e86;font-weight:normal;letter-spacing:0.6px;margin-right:-0.6px">10</div>
<div class="t" style="right:238.5px;top:151.89px;font-size:11px;color:#143e86;font-weight:normal;letter-spacing:0.6px;margin-right:-0.6px">12</div>
<div class="t" style="right:238.5px;top:131.59px;font-size:11px;color:#143e86;font-weight:normal;letter-spacing:0.6px;margin-right:-0.6px">14</div>
<div class="t" style="right:238.5px;top:111.29px;font-size:11px;color:#143e86;font-weight:normal;letter-spacing:0.6px;margin-right:-0.6px">16</div>
<div class="r" style="left:959px;top:259px;width:3px;height:1px;background:#111;"></div>
<div class="r" style="left:959px;top:239px;width:3px;height:1px;background:#111;"></div>
<div class="r" style="left:959px;top:218px;width:3px;height:1px;background:#111;"></div>
<div class="r" style="left:959px;top:198px;width:3px;height:1px;background:#111;"></div>
<div class="r" style="left:959px;top:178px;width:3px;height:1px;background:#111;"></div>
<div class="r" style="left:959px;top:157px;width:3px;height:1px;background:#111;"></div>
<div class="r" style="left:959px;top:137px;width:3px;height:1px;background:#111;"></div>
<div class="r" style="left:959px;top:117px;width:3px;height:1px;background:#111;"></div>
<div class="r" style="left:959px;top:278px;width:3px;height:1px;background:#111;"></div>
<div class="t tc" style="left:823.5px;width:400px;top:284.36px;font-size:10.8px;color:#143e86;font-weight:normal;letter-spacing:0.5px">Nov</div>
<div class="t tc" style="left:893.0px;width:400px;top:284.36px;font-size:10.8px;color:#143e86;font-weight:normal;letter-spacing:0.5px">Dec</div>
<div class="t" style="right:24.5px;top:99.06px;font-size:10.8px;color:#111;font-weight:normal;letter-spacing:0.5px">MA 38</div>
<div class="t" style="right:27.6px;top:301.80px;font-size:11.1px;color:#3a4550;font-weight:normal;">0.01 12/23/21 +0.01 (+100.00%) NDX Sweden</div>
<svg class="s" style="left:606px;top:322px;" width="22" height="20" viewBox="0 0 22 20">
<path d="M5.9 10.3 A5.3 5.3 0 0 1 15 6.4" fill="none" stroke="#aaa" stroke-width="1.9"/>
<path d="M15.4 2.9 L15.4 7.4 L11.2 7.4" fill="none" stroke="#aaa" stroke-width="1.9"/>
<path d="M16.2 9.2 A5.3 5.3 0 0 1 7.8 13.7" fill="none" stroke="#111" stroke-width="2.2"/>
<path d="M6.6 16.8 L6.6 12.6 L10.7 12.6" fill="none" stroke="#111" stroke-width="2.2"/>
</svg>
<svg class="s" style="left:320.8px;top:351px;" width="70" height="12" viewBox="0 0 70 12">
<rect x="0.9" y="1" width="2" height="9.8" fill="#999"/>
<path d="M7.9 2.5 L4.3 5.9 L7.9 9.3" fill="none" stroke="#999" stroke-width="2.2"/>
<path d="M26.9 2.5 L23.3 5.9 L26.9 9.3" fill="none" stroke="#aaa" stroke-width="2.1"/>
<path d="M43.3 2.5 L46.9 5.9 L43.3 9.3" fill="none" stroke="#111" stroke-width="2.2"/>
<path d="M62.5 2.5 L65.9 5.9 L62.5 9.3" fill="none" stroke="#111" stroke-width="2.2"/>
<rect x="67" y="1" width="2.2" height="9.8" fill="#111"/>
</svg>
<svg class="s" style="left:399px;top:358.6px;" width="47" height="7" viewBox="0 0 47 7"><path d="M1.2 0.5 L1.2 5.5 L45.7 5.5 L45.7 0.5" fill="none" stroke="#999" stroke-width="1.1"/></svg>
<div class="t" style="left:403.0px;top:352.89px;font-size:11px;color:#2a7fa0;font-weight:normal;">1</div>
<div class="t" style="left:448.7px;top:352.47px;font-size:11.5px;color:#2a3440;font-weight:normal;">from 34</div>
<svg class="s" style="left:585px;top:348px;" width="18" height="18" viewBox="0 0 18 18"><path d="M9 4 L9 12.8" stroke="#111" stroke-width="2.2"/><path d="M5.2 6.6 L9 2.6 L12.8 6.6" fill="none" stroke="#111" stroke-width="2.4"/><path d="M2.8 11.4 L2.8 16 L15.2 16 L15.2 11.4" fill="none" stroke="#aaa" stroke-width="1.8"/></svg>
<svg class="s" style="left:609px;top:346px;" width="19" height="20" viewBox="0 0 19 20"><circle cx="8" cy="8.7" r="5.1" fill="none" stroke="#aaa" stroke-width="2"/><path d="M11.8 12.6 L16.2 17" stroke="#111" stroke-width="2.4"/></svg>
<div class="r" style="left:362px;top:378px;width:1px;height:10px;background:#d6d6d6;"></div>
<div class="t tc" style="left:138.5px;width:400px;top:374.89px;font-size:11px;color:#1e2d3c;font-weight:normal;">Time</div>
<div class="t tc" style="left:296.6px;width:400px;top:374.89px;font-size:11px;color:#1e2d3c;font-weight:normal;">Headline</div>
<div class="t" style="left:316.5px;top:392.83px;font-size:11.3px;color:#2a3440;font-weight:normal;">12/30/...</div>
<div class="t" style="left:365.5px;top:393.04px;font-size:11.06px;color:#1b2d40;font-weight:normal;">DGAP-News: BÖAG Börsen AG: Börsen Düsseldor...</div>
<div class="t" style="left:316.5px;top:409.83px;font-size:11.3px;color:#2a3440;font-weight:normal;">12/30/...</div>
<div class="t" style="left:365.5px;top:410.04px;font-size:11.06px;color:#1b2d40;font-weight:normal;">DGAP-News: BÖAG Börsen AG: Börsen Düsseldor...</div>
<div class="t" style="left:316.5px;top:426.83px;font-size:11.3px;color:#2a3440;font-weight:normal;">12/29/...</div>
<div class="t" style="left:365.5px;top:427.21px;font-size:10.86px;color:#1b2d40;font-weight:normal;">IRW-PRESS: Yumy Bear Goods Inc.: Yumy Bear än...</div>
<div class="t" style="left:316.5px;top:443.83px;font-size:11.3px;color:#2a3440;font-weight:normal;">12/22/...</div>
<div class="t" style="left:365.5px;top:444.03px;font-size:11.07px;color:#1b2d40;font-weight:normal;">IRW-PRESS: Graphene Manufacturing Group Ltd.:...</div>
<div class="t" style="left:316.5px;top:460.83px;font-size:11.3px;color:#2a3440;font-weight:normal;">12/21/...</div>
<div class="t" style="left:365.5px;top:461.00px;font-size:11.1px;color:#1b2d40;font-weight:normal;">EQS-News: Sygnum lanciert DeFi-Anlagestrategie...</div>
<div class="t" style="left:316.5px;top:477.83px;font-size:11.3px;color:#2a3440;font-weight:normal;">12/20/...</div>
<div class="t" style="left:365.5px;top:478.02px;font-size:11.08px;color:#1b2d40;font-weight:normal;">DGAP-News: Francotyp-Postalia Holding AG: Elek...</div>
<div class="t" style="left:316.5px;top:494.83px;font-size:11.3px;color:#2a3440;font-weight:normal;">12/20/...</div>
<div class="t" style="left:365.5px;top:494.93px;font-size:11.19px;color:#1b2d40;font-weight:normal;">DGAP-News: Rentschler Biopharma verzeichnet s...</div>
<div class="t" style="left:316.5px;top:511.83px;font-size:11.3px;color:#2a3440;font-weight:normal;">12/20/...</div>
<div class="t" style="left:365.5px;top:511.64px;font-size:11.53px;color:#1b2d40;font-weight:normal;">Strom sparen im Büro - Arbeitsplatz energieeffizi...</div>
<div class="t" style="left:316.5px;top:528.83px;font-size:11.3px;color:#2a3440;font-weight:normal;">12/20/...</div>
<div class="t" style="left:365.5px;top:528.59px;font-size:11.59px;color:#1b2d40;font-weight:normal;">Strom sparen im Büro - Arbeitsplätze energieeffi...</div>
<div class="t" style="left:316.5px;top:545.83px;font-size:11.3px;color:#2a3440;font-weight:normal;">12/16/...</div>
<div class="t" style="left:365.5px;top:546.05px;font-size:11.04px;color:#1b2d40;font-weight:normal;">IRW-PRESS: Diamcor Mining Inc.: Diamcor steiger...</div>
<div class="t" style="left:316.5px;top:562.83px;font-size:11.3px;color:#2a3440;font-weight:normal;">12/15/...</div>
<div class="t" style="left:365.5px;top:563.00px;font-size:11.11px;color:#1b2d40;font-weight:normal;">DGAP-PVR: Deutsche Lufthansa AG: Veröffentlich...</div>
<div class="t" style="left:316.5px;top:579.83px;font-size:11.3px;color:#2a3440;font-weight:normal;">12/14/...</div>
<div class="t" style="left:365.5px;top:580.34px;font-size:10.7px;color:#1b2d40;font-weight:normal;">IRW-PRESS: Prospect Ridge Resources Corp. : -2-</div>
<div class="t" style="left:316.5px;top:596.83px;font-size:11.3px;color:#2a3440;font-weight:normal;">12/10/...</div>
<div class="t" style="left:365.5px;top:596.94px;font-size:11.18px;color:#1b2d40;font-weight:normal;">CMA-Revival/CDU/CSU will nationale Agrar-Mark...</div>
<div class="t" style="left:316.5px;top:613.83px;font-size:11.3px;color:#2a3440;font-weight:normal;">12/10/...</div>
<div class="t" style="left:365.5px;top:613.94px;font-size:11.18px;color:#1b2d40;font-weight:normal;">CMA-Revival/CDU/CSU will nationale Agrar-Mark...</div>
<div class="t" style="left:316.5px;top:630.83px;font-size:11.3px;color:#2a3440;font-weight:normal;">12/10/...</div>
<div class="t" style="left:365.5px;top:631.11px;font-size:10.98px;color:#1b2d40;font-weight:normal;">PTA-News: ERWE Immobilien AG: ERWE Immobili...</div>
<div class="t" style="left:316.5px;top:647.83px;font-size:11.3px;color:#2a3440;font-weight:normal;">12/9/21</div>
<div class="t" style="left:365.5px;top:647.99px;font-size:11.12px;color:#1b2d40;font-weight:normal;">IRW-PRESS: Lithium South Development Corpora...</div>
<div class="t" style="left:316.5px;top:664.83px;font-size:11.3px;color:#2a3440;font-weight:normal;">12/9/21</div>
<div class="t" style="left:365.5px;top:665.23px;font-size:10.83px;color:#1b2d40;font-weight:normal;">IRW-PRESS: CAT Strategic Metals Corporation: CA...</div>
<svg class="s" style="left:634px;top:344px;" width="556" height="260" viewBox="0 0 556 260"><g transform="translate(-634,-344)"><path d="M915.80 475.00 L915.80 362.10 A112.9 112.9 0 0 1 1010.85 535.92 Z" fill="#5b95d5" stroke="#fff" stroke-width="1.1" stroke-linejoin="round"/><path d="M912.00 481.70 L1006.71 542.41 A112.5 112.5 0 0 1 819.13 545.20 Z" fill="#ff6330" stroke="#fff" stroke-width="1.1" stroke-linejoin="round"/><path d="M912.00 476.70 L815.09 542.96 A117.4 117.4 0 0 1 795.56 461.70 Z" fill="#fdd632" stroke="#fff" stroke-width="1.1" stroke-linejoin="round"/><path d="M912.00 476.70 L795.56 461.70 A117.4 117.4 0 0 1 814.13 411.87 Z" fill="#1e1e1e" stroke="#fff" stroke-width="1.1" stroke-linejoin="round"/><path d="M912.00 476.70 L814.13 411.87 A117.4 117.4 0 0 1 847.68 378.49 Z" fill="#436b9b" stroke="#fff" stroke-width="1.1" stroke-linejoin="round"/><path d="M912.00 476.70 L847.68 378.49 A117.4 117.4 0 0 1 879.97 363.75 Z" fill="#c0674b" stroke="#fff" stroke-width="1.1" stroke-linejoin="round"/><path d="M912.00 476.70 L879.97 363.75 A117.4 117.4 0 0 1 902.44 359.69 Z" fill="#a68912" stroke="#fff" stroke-width="1.1" stroke-linejoin="round"/><path d="M912.00 476.70 L902.44 359.69 A117.4 117.4 0 0 1 906.73 359.42 Z" fill="#8ab4e3" stroke="#fff" stroke-width="1.1" stroke-linejoin="round"/><path d="M912.00 476.70 L906.73 359.42 A117.4 117.4 0 0 1 910.88 359.31 Z" fill="#ff8660" stroke="#fff" stroke-width="1.1" stroke-linejoin="round"/><path d="M912.00 476.70 L910.88 359.31 A117.4 117.4 0 0 1 911.71 359.30 Z" fill="#fde58e" stroke="#fff" stroke-width="1.1" stroke-linejoin="round"/><path d="M912.00 476.70 L911.71 359.30 A117.4 117.4 0 0 1 911.91 359.30 Z" fill="#0f4580" stroke="#fff" stroke-width="1.1" stroke-linejoin="round"/><path d="M912.00 476.70 L911.91 359.30 A117.4 117.4 0 0 1 911.99 359.30 Z" fill="#a33310" stroke="#fff" stroke-width="1.1" stroke-linejoin="round"/><path d="M912.00 476.70 L911.99 359.30 A117.4 117.4 0 0 1 912.00 359.30 Z" fill="#5b95d5" stroke="#fff" stroke-width="1.1" stroke-linejoin="round"/></g></svg>
<div class="r" style="left:645.7px;top:614px;width:20.3px;height:15px;background:#5b95d5;"></div>
<div class="t" style="left:670.3px;top:617.33px;font-size:11.3px;color:#1b2d40;font-weight:normal;">Other</div>
<div class="t" style="right:291.0px;top:616.69px;font-size:11px;color:#2a3440;font-weight:normal;">686,676</div>
<div class="r" style="left:645.7px;top:636px;width:20.3px;height:15px;background:#ff6330;"></div>
<div class="t" style="left:670.3px;top:639.33px;font-size:11.3px;color:#1b2d40;font-weight:normal;">Knock-out</div>
<div class="t" style="right:291.0px;top:638.69px;font-size:11px;color:#2a3440;font-weight:normal;">632,496</div>
<div class="r" style="left:645.7px;top:658px;width:20.3px;height:15px;background:#fdd632;"></div>
<div class="t" style="left:670.3px;top:661.33px;font-size:11.3px;color:#1b2d40;font-weight:normal;">Warrant Other</div>
<div class="t" style="right:291.0px;top:660.69px;font-size:11px;color:#2a3440;font-weight:normal;">233,450</div>
<div class="r" style="left:645.7px;top:680px;width:20.3px;height:15px;background:#1e1e1e;"></div>
<div class="t" style="left:670.3px;top:683.33px;font-size:11.3px;color:#1b2d40;font-weight:normal;">Discount</div>
<div class="t" style="right:291.0px;top:682.69px;font-size:11px;color:#2a3440;font-weight:normal;">146,569</div>
<div class="r" style="left:645.7px;top:702px;width:20.3px;height:15px;background:#436b9b;"></div>
<div class="t" style="left:670.3px;top:705.33px;font-size:11.3px;color:#1b2d40;font-weight:normal;">Bonus</div>
<div class="t" style="right:291.0px;top:704.69px;font-size:11px;color:#2a3440;font-weight:normal;">130,199</div>
<div class="r" style="left:645.7px;top:724px;width:20.3px;height:15px;background:#c0674b;"></div>
<div class="t" style="left:670.3px;top:727.33px;font-size:11.3px;color:#1b2d40;font-weight:normal;">Factor</div>
<div class="t" style="right:291.0px;top:726.69px;font-size:11px;color:#2a3440;font-weight:normal;">97,346</div>
<div class="r" style="left:645.7px;top:746px;width:20.3px;height:15px;background:#a68912;"></div>
<div class="t" style="left:670.3px;top:749.33px;font-size:11.3px;color:#1b2d40;font-weight:normal;">Reverse convertible</div>
<div class="t" style="right:291.0px;top:748.69px;font-size:11px;color:#2a3440;font-weight:normal;">62,506</div>
<div class="r" style="left:923.8px;top:614px;width:20.2px;height:15px;background:#8ab4e3;"></div>
<div class="t" style="left:948.3px;top:617.33px;font-size:11.3px;color:#1b2d40;font-weight:normal;">Express</div>
<div class="t" style="right:12.7px;top:616.69px;font-size:11px;color:#2a3440;font-weight:normal;">11,728</div>
<div class="r" style="left:923.8px;top:636px;width:20.2px;height:15px;background:#ff8660;"></div>
<div class="t" style="left:948.3px;top:639.33px;font-size:11.3px;color:#1b2d40;font-weight:normal;">Index</div>
<div class="t" style="right:12.7px;top:638.69px;font-size:11px;color:#2a3440;font-weight:normal;">11,347</div>
<div class="r" style="left:923.8px;top:658px;width:20.2px;height:15px;background:#fde58e;"></div>
<div class="t" style="left:948.3px;top:661.33px;font-size:11.3px;color:#1b2d40;font-weight:normal;">Guarantee</div>
<div class="t" style="right:12.7px;top:660.69px;font-size:11px;color:#2a3440;font-weight:normal;">2,268</div>
<div class="r" style="left:923.8px;top:680px;width:20.2px;height:15px;background:#0f4580;"></div>
<div class="t" style="left:948.3px;top:683.33px;font-size:11.3px;color:#1b2d40;font-weight:normal;">Outperf.</div>
<div class="t" style="right:12.7px;top:682.69px;font-size:11px;color:#2a3440;font-weight:normal;">548</div>
<div class="r" style="left:923.8px;top:702px;width:20.2px;height:15px;background:#a33310;"></div>
<div class="t" style="left:948.3px;top:705.33px;font-size:11.3px;color:#1b2d40;font-weight:normal;">ETC</div>
<div class="t" style="right:12.7px;top:704.69px;font-size:11px;color:#2a3440;font-weight:normal;">224</div>
<div class="r" style="left:923.8px;top:724px;width:20.2px;height:15px;background:#5b95d5;"></div>
<div class="t" style="left:948.3px;top:727.33px;font-size:11.3px;color:#1b2d40;font-weight:normal;">ETN</div>
<div class="t" style="right:12.7px;top:726.69px;font-size:11px;color:#2a3440;font-weight:normal;">20</div>
<div class="t" style="left:948.3px;top:746.19px;font-size:11px;color:#555;font-weight:normal;">All</div>
<div class="t" style="right:12.7px;top:746.19px;font-size:11px;color:#555;font-weight:normal;">2,015,377</div>
</body></html>
